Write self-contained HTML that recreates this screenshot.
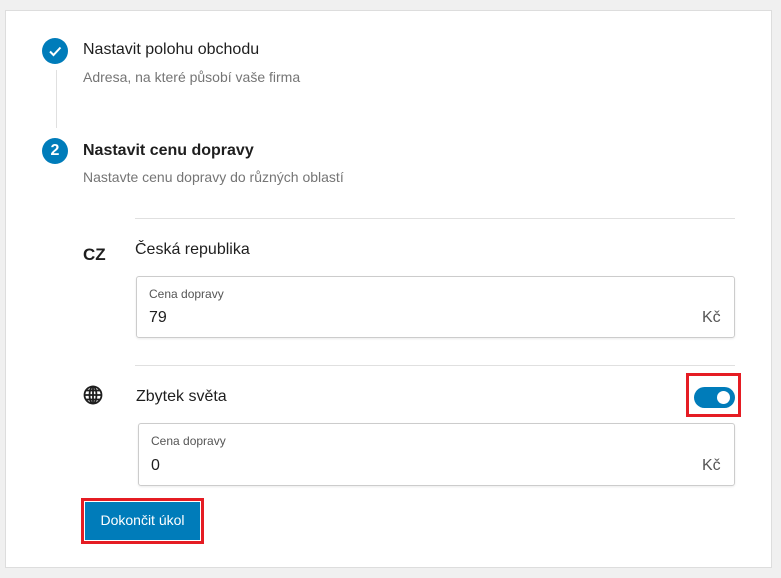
<!DOCTYPE html><html><head><style>
body{margin:0;width:781px;height:578px;background:#f0f0f0;font-family:"Liberation Sans",sans-serif;position:relative;overflow:hidden}
.a{position:absolute}
.card{left:5px;top:10px;width:765px;height:556px;background:#fff;border:1px solid #ddd}
.circ{width:26px;height:26px;border-radius:50%;background:#007cba;color:#fff;font-weight:bold;font-size:16px;text-align:center;line-height:26px}
.t{font-size:16px;color:#1e1e1e;white-space:nowrap}
.s{font-size:14px;color:#757575;white-space:nowrap}
.sep{height:1px;background:#e0e0e0}
.inp{border:1px solid #ccc;border-radius:3px;box-shadow:0 1px 2px rgba(0,0,0,.08)}
.lab{font-size:12px;color:#555}
.val{font-size:16px;color:#1e1e1e}
</style></head><body>
<div class="a card"></div>
<div class="a circ" style="left:42px;top:38px"><svg width="26" height="26"><path d="M8 13.5l3.5 3.5 7-7.5" stroke="#fff" stroke-width="2" fill="none"/></svg></div>
<div class="a" style="left:56px;top:70px;width:1px;height:58px;background:#e0e0e0"></div>
<div class="a t" style="left:83px;top:41px">Nastavit polohu obchodu</div>
<div class="a s" style="left:83px;top:69px">Adresa, na které působí vaše firma</div>
<div class="a circ" style="left:42px;top:138px">2</div>
<div class="a t" style="left:83px;top:142px;font-weight:bold">Nastavit cenu dopravy</div>
<div class="a s" style="left:83px;top:169px">Nastavte cenu dopravy do různých oblastí</div>
<div class="a sep" style="left:135px;top:218px;width:600px"></div>
<div class="a t" style="left:83px;top:245px;font-weight:bold;font-size:17px">CZ</div>
<div class="a t" style="left:135px;top:241px">Česká republika</div>
<div class="a inp" style="left:136px;top:276px;width:597px;height:60px"></div>
<div class="a lab" style="left:149px;top:287px">Cena dopravy</div>
<div class="a val" style="left:149px;top:309px">79</div>
<div class="a val" style="left:702px;top:309px;color:#555">Kč</div>
<div class="a sep" style="left:135px;top:365px;width:600px"></div>
<svg class="a" style="left:83px;top:385px" width="20" height="20" viewBox="0 0 20 20"><g fill="none" stroke="#1e1e1e" stroke-width="1.8"><circle cx="10" cy="10" r="8.5"/><ellipse cx="10" cy="10" rx="3.5" ry="8.5"/><path d="M1.5 10h17M3 5.5h14M3 14.5h14M10 1.5v17"/></g></svg>
<div class="a t" style="left:136px;top:388px">Zbytek světa</div>
<div class="a" style="left:686px;top:373px;width:49px;height:38px;border:3px solid #e51c23"></div>
<div class="a" style="left:694px;top:387px;width:41px;height:21px;border-radius:11px;background:#007cba"></div>
<div class="a" style="left:717px;top:391px;width:13px;height:13px;border-radius:50%;background:#fff"></div>
<div class="a inp" style="left:138px;top:423px;width:595px;height:61px"></div>
<div class="a lab" style="left:151px;top:434px">Cena dopravy</div>
<div class="a val" style="left:151px;top:457px">0</div>
<div class="a val" style="left:702px;top:457px;color:#555">Kč</div>
<div class="a" style="left:81px;top:498px;width:117px;height:40px;border:3px solid #e51c23"></div>
<div class="a" style="left:85px;top:502px;width:115px;height:38px;background:#007cba;color:#fff;font-size:14px;line-height:36px;text-align:center">Dokončit úkol</div>
</body></html>
